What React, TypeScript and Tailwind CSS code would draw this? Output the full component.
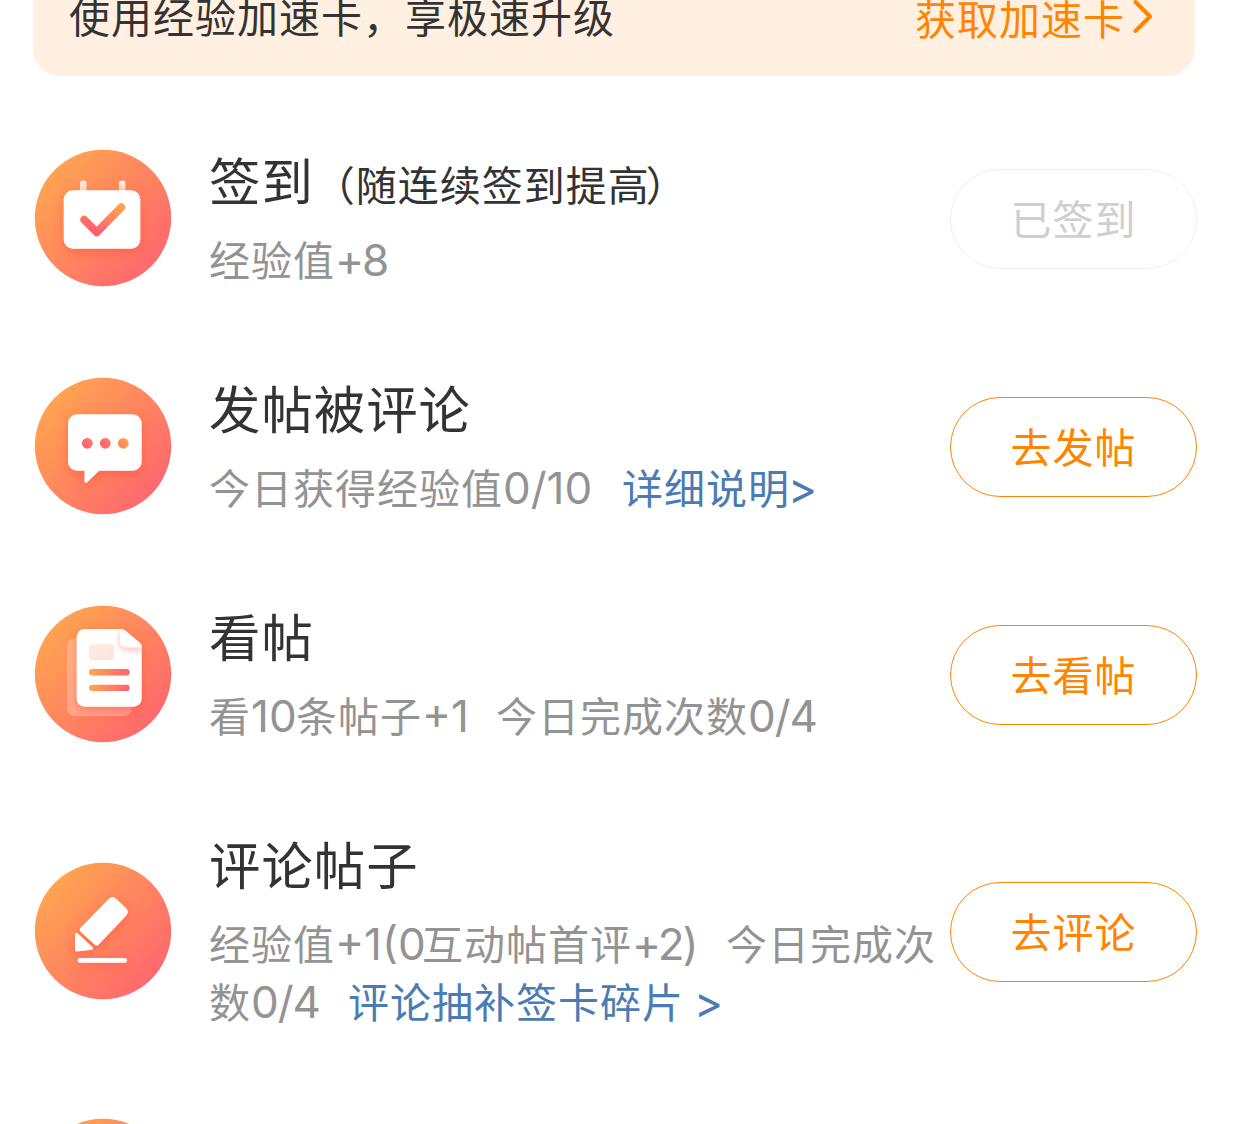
import type { ReactNode } from "react"
import clsx from "clsx"

const Badge = ({ id, children }: { id: string; children?: ReactNode }) => (
    <svg viewBox="-0.5 -0.5 138 138" className="w-[138px] h-[138px] shrink-0 mt-[45px]">
        <defs>
            <linearGradient id={`${id}-bg`} x1="0.1" y1="0.15" x2="0.88" y2="0.85">
                <stop offset="0" stopColor="#ffa451" />
                <stop offset="1" stopColor="#ff686d" />
            </linearGradient>
            <filter id={`${id}-shadow`} x="-40%" y="-40%" width="180%" height="180%">
                <feDropShadow dx="0" dy="3" stdDeviation="5" floodColor="#ff4a26" floodOpacity="0.5" />
            </filter>
        </defs>
        <circle cx="68.5" cy="68.5" r="68.2" fill={`url(#${id}-bg)`} />
        {children}
    </svg>
)

const SignIcon = () => (
    <Badge id="sign">
        <defs>
            <linearGradient id="sign-check" x1="0.9" y1="0" x2="0.3" y2="1">
                <stop offset="0" stopColor="#ffa04f" />
                <stop offset="1" stopColor="#ff6071" />
            </linearGradient>
            <linearGradient id="sign-pin" x1="0" y1="0" x2="0" y2="1">
                <stop offset="0" stopColor="#fff" stopOpacity="0.9" />
                <stop offset="1" stopColor="#fff" stopOpacity="0.55" />
            </linearGradient>
        </defs>
        <rect x="45.5" y="31" width="6.5" height="14" rx="3.2" fill="url(#sign-pin)" />
        <rect x="84.4" y="31" width="6.5" height="14" rx="3.2" fill="url(#sign-pin)" />
        <rect x="29.2" y="40.8" width="76.6" height="58.4" rx="9" fill="#fff" filter="url(#sign-shadow)" />
        <path d="M49.8 70.2 62.2 82.8 86.8 57.8" fill="none" stroke="url(#sign-check)" strokeWidth="8" strokeLinecap="round" strokeLinejoin="round" />
    </Badge>
)

const PostIcon = () => (
    <Badge id="post">
        <defs>
            <linearGradient id="post-dot" x1="0" y1="1" x2="1" y2="0.3">
                <stop offset="0" stopColor="#ff5a74" />
                <stop offset="1" stopColor="#ff7a66" />
            </linearGradient>
            <linearGradient id="post-dot-end" x1="0" y1="1" x2="1" y2="0">
                <stop offset="0" stopColor="#ff7a66" />
                <stop offset="1" stopColor="#ffac4c" />
            </linearGradient>
        </defs>
        <path
            d="M42.5 36.8H98.2a9 9 0 0 1 9 9V84.2a9 9 0 0 1-9 9H64.5L53 104.6q-3 2.4-3-1.2V93.2H42.5a9 9 0 0 1-9-9V45.8a9 9 0 0 1 9-9z"
            fill="#fff"
            filter="url(#post-shadow)"
        />
        <circle cx="52.8" cy="65.8" r="5.4" fill="url(#post-dot)" />
        <circle cx="70.8" cy="65.8" r="5.4" fill="url(#post-dot)" />
        <circle cx="88.8" cy="65.8" r="5.4" fill="url(#post-dot-end)" />
    </Badge>
)

const ReadIcon = () => (
    <Badge id="read">
        <defs>
            <linearGradient id="read-line" x1="0" y1="0" x2="1" y2="0">
                <stop offset="0" stopColor="#ffa64f" />
                <stop offset="1" stopColor="#ff6070" />
            </linearGradient>
            <linearGradient id="read-pic" x1="0" y1="0" x2="1" y2="1">
                <stop offset="0" stopColor="#ffeedf" />
                <stop offset="1" stopColor="#ffdfdf" />
            </linearGradient>
            <filter id="read-fold" x="-60%" y="-60%" width="220%" height="220%">
                <feDropShadow dx="0" dy="3" stdDeviation="3" floodColor="#ff5a4a" floodOpacity="0.4" />
            </filter>
            <clipPath id="read-page">
                <path d="M50.2 23.5H85.5a9 9 0 0 1 6 2.2L105 37a6 6 0 0 1 2.2 4.6V93.2a8 8 0 0 1-8 8h-49a8 8 0 0 1-8-8V31.5a8 8 0 0 1 8-8z" />
            </clipPath>
        </defs>
        <rect x="32.5" y="32.8" width="65" height="77.7" rx="8" fill="#fff" fillOpacity="0.28" />
        <path
            d="M50.2 23.5H85.5a9 9 0 0 1 6 2.2L105 37a6 6 0 0 1 2.2 4.6V93.2a8 8 0 0 1-8 8h-49a8 8 0 0 1-8-8V31.5a8 8 0 0 1 8-8z"
            fill="#fff"
            filter="url(#read-shadow)"
        />
        <g clipPath="url(#read-page)">
            <path d="M85.5 20V36.2a5.5 5.5 0 0 0 5.5 5.5h20z" fill="#fff" filter="url(#read-fold)" />
        </g>
        <rect x="54.5" y="38.8" width="25" height="15.7" rx="3" fill="url(#read-pic)" />
        <rect x="54.5" y="63.5" width="40.7" height="6.5" rx="3.2" fill="url(#read-line)" />
        <rect x="54.5" y="79.3" width="40.7" height="6.3" rx="3.1" fill="url(#read-line)" />
    </Badge>
)

const CommentIcon = () => (
    <Badge id="comment">
        <g fill="#fff" stroke="#fff" strokeLinejoin="round" filter="url(#comment-shadow)">
            <path d="M74 36.4q4-3.6 8 0L91.6 45.8q3.4 3.6 0 7.4L64 82.2q-1.8 1.8-3.6 0L45.8 69q-1.6-1.6 0-3.4z" strokeWidth="0" />
            <path d="M42 71.8 57 85.8 42 87.4z" strokeWidth="3" />
            <rect x="43.2" y="95.5" width="49.3" height="4.8" rx="2.4" strokeWidth="0" />
        </g>
    </Badge>
)

/* Latin digits and signs run a touch larger than the Chinese around them */
const Num = ({ className, children }: { className: string; children: ReactNode }) => (
    <span className={clsx("inline-block font-[Inter,sans-serif] text-[44px] leading-none whitespace-pre", className)}>
        {children}
    </span>
)

const tasks = [
    {
        icon: <SignIcon />,
        title: (
            <>
                签到<span className="text-[41px] tracking-[1px]">（随连续签到提高<span className="-ml-1">）</span></span>
            </>
        ),
        lines: [<>经验值<Num className="w-[52px] tracking-[-2px]">+8</Num></>],
        action: "已签到",
        done: true,
    },
    {
        icon: <PostIcon />,
        title: "发帖被评论",
        lines: [
            <>
                今日获得经验值<Num className="w-[119px] tracking-normal">0/10</Num>
                <a className="text-[#4a7cb3]">详细说明<Num className="w-6 -ml-0.5 text-[41px]">&gt;</Num></a>
            </>,
        ],
        action: "去发帖",
    },
    {
        icon: <ReadIcon />,
        title: "看帖",
        lines: [
            <>
                看<Num className="w-[45px] tracking-normal">10</Num>条帖子<Num className="w-[74px] tracking-normal">+1</Num>
                今日完成次数<Num className="w-[68px] tracking-[-1px]">0/4</Num>
            </>,
        ],
        action: "去看帖",
    },
    {
        icon: <CommentIcon />,
        title: "评论帖子",
        lines: [
            <>
                经验值<Num className="w-[87px] tracking-normal">+1(0</Num>互动帖首评<Num className="w-[94px] tracking-[-2px]">+2)</Num>今日完成次
            </>,
            <>
                数<Num className="w-[97px] tracking-[-1px]">0/4</Num>
                <a className="text-[#4a7cb3]">评论抽补签卡碎片<Num className="w-10 pl-2.5 text-[41px]">&gt;</Num></a>
            </>,
        ],
        action: "去评论",
        tall: true,
    },
]

export default function App() {
    return (
        <div className="w-[1244px] h-[1124px] overflow-hidden bg-white font-['Noto_Sans_CJK_SC',sans-serif] text-[#333]">
            {/* Banner */}
            <div className="-mt-10 ml-[33px] w-[1162px] h-[116px] rounded-[27px] bg-[#fff0e2] pl-9 pr-[42px] flex items-center justify-between text-[41px] tracking-[1px] leading-[58px]">
                <span className="pb-1.5">使用经验加速卡，享极速升级</span>
                <span className="pb-0.5 flex items-center text-[#ff8400]">
                    获取加速卡
                    <svg viewBox="0 0 20 36" className="ml-2 w-5 h-9" fill="none" stroke="currentColor" strokeWidth="4" strokeLinecap="round" strokeLinejoin="round">
                        <path d="M2.5 3 17 17.5 2.5 32" />
                    </svg>
                </span>
            </div>

            {/* Task list */}
            <div className="pt-7 pl-[34px] pr-[47px]">
                {tasks.map((task) => (
                    <div key={task.action} className={clsx("flex", task.tall ? "h-[286px] items-center" : "h-[228px] items-start")}>
                        <div className={clsx("shrink-0", task.tall && "-mt-[46px]")}>{task.icon}</div>
                        <div className="ml-[37px] mt-10 w-[741px] shrink-0 self-start whitespace-nowrap">
                            <h3 className="h-[70px] text-[51.4px] tracking-[1px] leading-[70px]">{task.title}</h3>
                            <div className="mt-[15px] text-[41px] tracking-[1px] text-[#939393]">
                                {task.lines.map((line, i) => (
                                    <p key={i} className="h-[58px] leading-[58px]">{line}</p>
                                ))}
                            </div>
                        </div>
                        <button
                            className={clsx(
                                "self-center mt-0.5 w-[247px] h-[100px] pb-1 shrink-0 rounded-full border text-[41px] tracking-[1px] leading-[58px]",
                                task.done ? "border-[#f0f0f0] text-[#cfcfcf]" : "border-[#ff8400] text-[#ff8400]"
                            )}
                        >
                            {task.action}
                        </button>
                    </div>
                ))}
                <div className="-mt-px h-[228px]">
                    <Badge id="next" />
                </div>
            </div>
        </div>
    )
}
